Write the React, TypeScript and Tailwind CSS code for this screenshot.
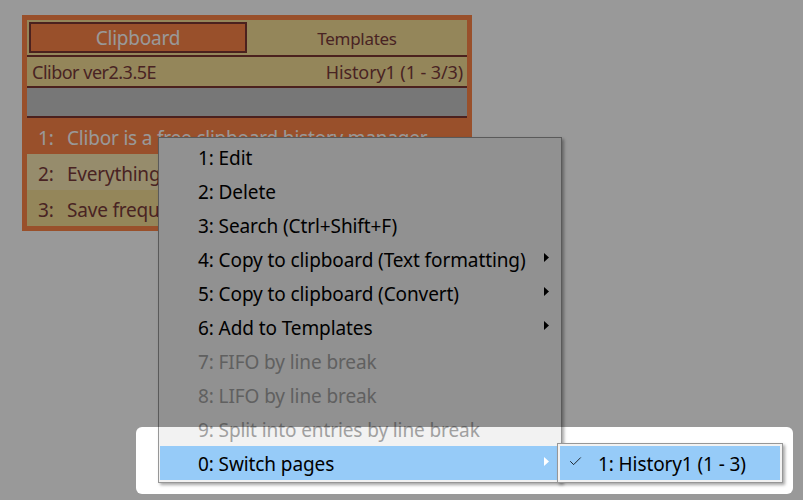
import { Check } from 'lucide-react'

interface MenuItem {
  label: string
  sub?: boolean
  disabled?: boolean
  active?: boolean
}

const menuItems: MenuItem[] = [
  { label: '1: Edit' },
  { label: '2: Delete' },
  { label: '3: Search (Ctrl+Shift+F)' },
  { label: '4: Copy to clipboard (Text formatting)', sub: true },
  { label: '5: Copy to clipboard (Convert)', sub: true },
  { label: '6: Add to Templates', sub: true },
  { label: '7: FIFO by line break', disabled: true },
  { label: '8: LIFO by line break', disabled: true },
  { label: '9: Split into entries by line break', disabled: true },
  { label: '0: Switch pages', sub: true, active: true },
]

const history = [
  { no: '1:', text: 'Clibor is a free clipboard history manager', selected: true },
  { no: '2:', text: 'Everything you copy is saved automatically', light: true },
  { no: '3:', text: 'Save frequently used text as templates' },
]

const font = "font-['Noto_Sans','Open_Sans',sans-serif]"

// small right-pointing triangle used for submenus
function SubArrow({ white }: { white?: boolean }) {
  return (
    <svg width="5" height="9" viewBox="0 0 5 9" className="shrink-0 -mt-[3px]">
      <polygon points="0,0 5,4.5 0,9" fill={white ? '#ffffff' : '#000000'} />
    </svg>
  )
}

function CliborWindow() {
  return (
    <div className={`absolute left-[22px] top-[15px] w-[450px] h-[216px] bg-[#ff8649] p-[5px] ${font}`}>
      <div className="flex flex-col h-full bg-[#f7df96]">
        {/* tabs */}
        <div className="flex h-[35px] p-[2px] pr-0">
          <div className="w-[218px] h-[31px] border-2 border-[#7d3732] bg-[#ff8649] flex items-center justify-center pt-[2px] text-white text-[19px] tracking-[-0.2px]">
            Clipboard
          </div>
          <div className="flex-1 h-[31px] flex items-center justify-center pt-[2px] text-[#7a3b3b] text-[17px] tracking-[-0.3px]">
            Templates
          </div>
        </div>
        <div className="h-[2px] bg-[#7d3732]" />
        <div className="flex items-center justify-between h-[29px] pl-[5px] pr-[4px] pt-[2px] text-[#7a3b3b] text-[18px] tracking-[-0.1px]">
          <span className="tracking-[-0.5px]">Clibor ver2.3.5E</span>
          <span>History1 (1 - 3/3)</span>
        </div>
        <div className="h-[2px] bg-[#7d3732]" />
        <div className="h-[28px] bg-[#c7c7c7]" />
        <div className="h-[2px] bg-[#7d3732]" />
        {history.map((row) => (
          <div
            key={row.no}
            className={`flex items-center h-[36px] pl-[11px] pt-[4px] text-[19px] tracking-[-0.2px] whitespace-nowrap overflow-hidden ${
              row.selected ? 'bg-[#ff8649] text-white' : row.light ? 'bg-[#fae9b4] text-[#7a3b3b]' : 'bg-[#f7df96] text-[#7a3b3b]'
            }`}
          >
            <span className="w-[29px] shrink-0">{row.no}</span>
            <span>{row.text}</span>
          </div>
        ))}
      </div>
    </div>
  )
}

function ContextMenu() {
  return (
    <div
      className={`absolute left-[158px] top-[137px] w-[404px] bg-[#f2f2f2] border border-[#979797] py-[2px] pl-px pr-[3px] shadow-[2px_2px_3px_rgba(0,0,0,0.35)] ${font}`}
    >
      {menuItems.map((item) => (
        <div
          key={item.label}
          className={`flex items-center justify-between h-[34px] pl-[38px] pr-[9px] text-[19px] tracking-[-0.1px] whitespace-nowrap ${
            item.active ? 'bg-[#96cbf8]' : ''
          } ${item.disabled ? 'text-[#a0a0a0]' : 'text-black'}`}
        >
          <span className="pt-[3px]">{item.label}</span>
          {item.sub && <SubArrow white={item.active} />}
        </div>
      ))}
    </div>
  )
}

function PagesSubmenu() {
  return (
    <div
      className={`absolute left-[557px] top-[443px] w-[226px] bg-[#f2f2f2] border border-[#979797] p-[2px] shadow-[2px_2px_3px_rgba(0,0,0,0.35)] ${font}`}
    >
      <div className="flex items-center h-[34px] bg-[#96cbf8] text-black text-[19px] tracking-[-0.1px] whitespace-nowrap">
        <span className="w-[30px] flex justify-center -mt-[3px]">
          <Check size={15} strokeWidth={1.3} />
        </span>
        <span className="ml-[8px] pt-[3px]">1: History1 (1 - 3)</span>
      </div>
    </div>
  )
}

export default function App() {
  return (
    <div className="relative w-[803px] h-[500px] bg-white overflow-hidden">
      <CliborWindow />
      <ContextMenu />
      <PagesSubmenu />
      {/* dim everything except the spotlighted row */}
      <div className="absolute left-[136px] top-[427px] w-[657px] h-[67px] rounded-[6px] shadow-[0_0_0_2000px_rgba(0,0,0,0.4)] pointer-events-none" />
    </div>
  )
}
